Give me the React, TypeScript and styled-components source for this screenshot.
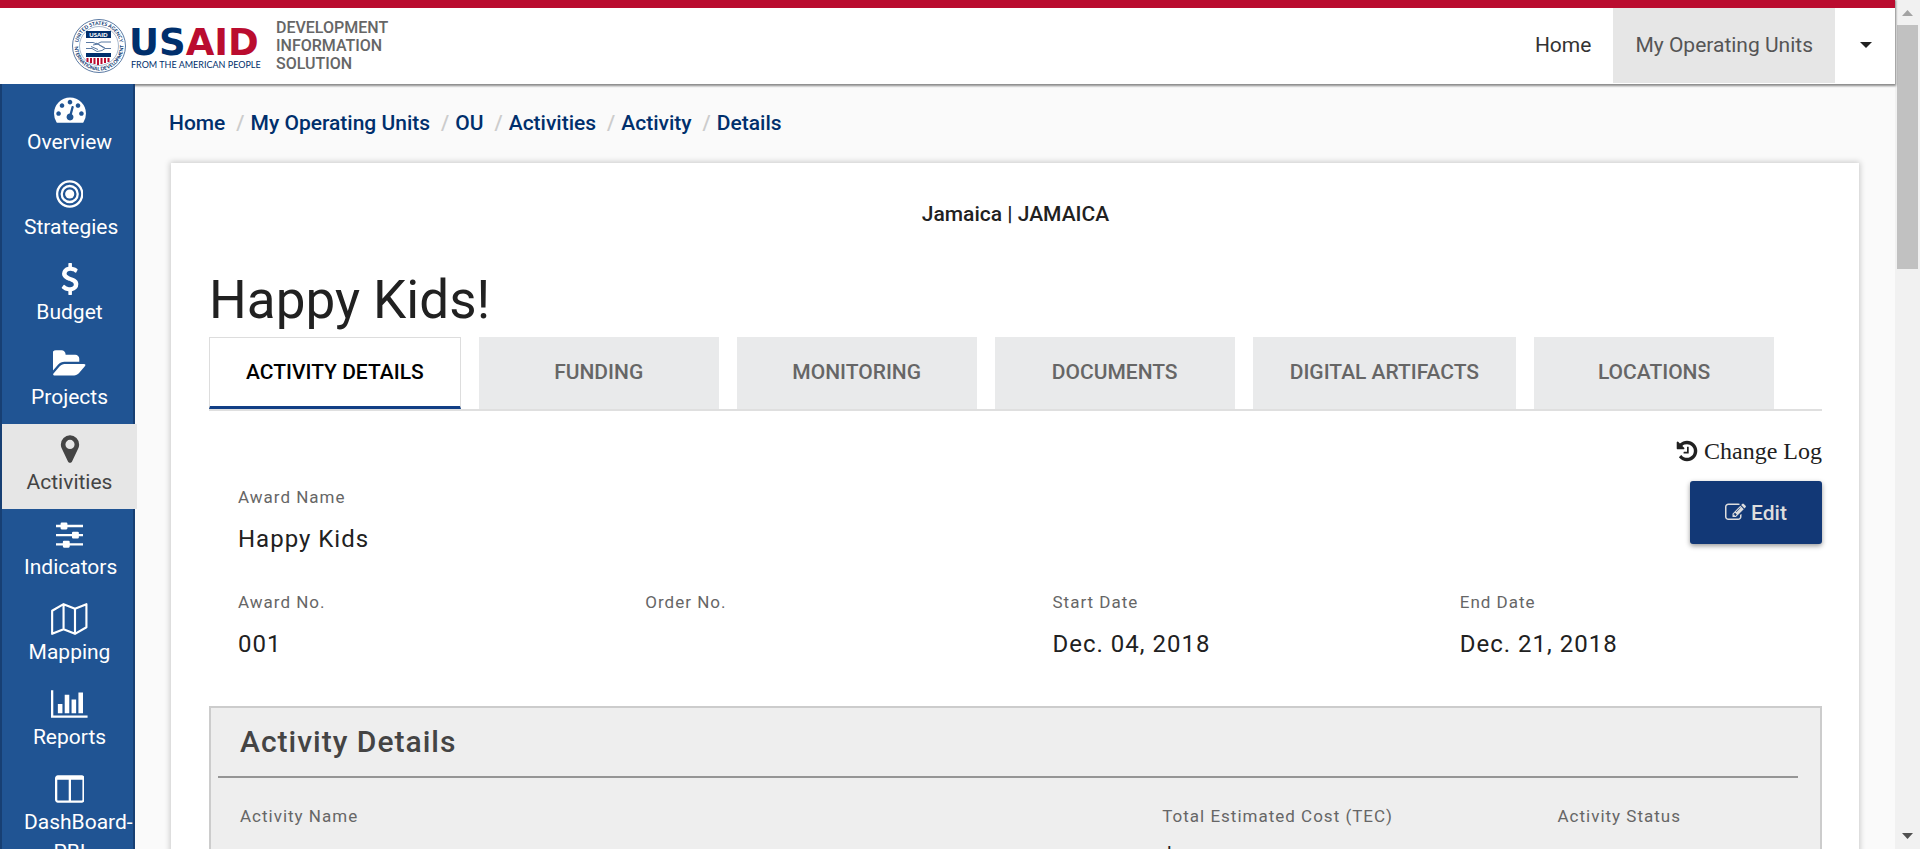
import React from "react";
import styled, { createGlobalStyle } from "styled-components";

const GlobalStyle = createGlobalStyle`
  *, *::before, *::after { box-sizing: border-box; }
  body {
    margin: 0;
    background: #fafafa;
    color: #212121;
    font-family: Roboto, "Liberation Sans", sans-serif;
  }
  h1, h2, p, ul, ol, dl, dd { margin: 0; padding: 0; }
  ul, ol { list-style: none; }
  a { color: inherit; text-decoration: none; }
  button { border: 0; padding: 0; background: none; font: inherit; color: inherit; cursor: pointer; }
`;

const Viewport = styled.div`
  display: flex;
  height: 100vh;
  overflow: hidden;
`;

const Page = styled.div`
  display: flex;
  flex-direction: column;
  flex: 1;
  min-width: 0;
`;

/* ---------- header ---------- */

const Header = styled.header`
  display: flex;
  align-items: stretch;
  justify-content: space-between;
  flex: none;
  height: 84px;
  border-top: 8px solid #ba0c2f;
  background: #fff;
  box-shadow: 0 1px 2px 1px rgba(0, 0, 0, 0.45);
  z-index: 1;
`;

const Brand = styled.a`
  display: flex;
  align-items: center;
  gap: 12px;
  padding-left: 72px;
`;

const BrandName = styled.span`
  width: 120px;
  color: #666;
  font-size: 16px;
  font-weight: 500;
  line-height: 18px;
`;

const TopNav = styled.nav`
  display: flex;
  padding-bottom: 1px;
`;

const TopLink = styled.a<{ $active?: boolean }>`
  display: flex;
  align-items: center;
  padding: 0 22px 2px;
  background: ${(p) => (p.$active ? "#e6e6e6" : "transparent")};
  color: ${(p) => (p.$active ? "#555" : "#333")};
  font-size: 21px;
`;

const MenuButton = styled.button`
  display: flex;
  align-items: center;
  justify-content: center;
  width: 60px;
  padding: 0 0 1px 2px;
`;

/* ---------- side navigation ---------- */

const Body = styled.div`
  display: flex;
  flex: 1;
  min-height: 0;
`;

const SideNav = styled.nav`
  flex: none;
  width: 135px;
  border: solid #173f73;
  border-width: 0 2px;
  background: #205493;
  z-index: 2;
`;

const SideLink = styled.a<{ $active?: boolean }>`
  display: flex;
  flex-direction: column;
  align-items: center;
  gap: 2px;
  width: 135px;
  height: 85px;
  padding: 9px 22px 0;
  background: ${(p) => (p.$active ? "#e6e6e6" : "transparent")};
  color: ${(p) => (p.$active ? "#444" : "#fff")};
  font-size: 21px;
  line-height: 30px;
  text-align: center;
`;

const SideIcon = styled.svg`
  flex: none;
  height: 32px;
  fill: currentColor;
`;

const SideLabel = styled.span`
  align-self: stretch;
`;

/* ---------- content ---------- */

const Main = styled.main`
  flex: 1;
  min-width: 0;
  padding: 24px 36px 0;
`;

const Crumbs = styled.ol`
  display: flex;
  margin-left: -2px;
  color: #002f6c;
  font-size: 21px;
  font-weight: 500;
  line-height: 30px;
`;

const Crumb = styled.li`
  & + &::before {
    content: "/";
    padding: 0 6px 0 11px;
    color: #ccc;
  }
`;

const Card = styled.section`
  margin-top: 25px;
  padding: 36px 37px 0 38px;
  background: #fff;
  box-shadow: 0 0 6px 1px rgba(0, 0, 0, 0.2);
`;

const Unit = styled.p`
  font-size: 21px;
  font-weight: 500;
  line-height: 30px;
  text-align: center;
`;

const Title = styled.h1`
  margin-top: 35px;
  padding-bottom: 1px;
  font-size: 53px;
  font-weight: 400;
  line-height: 72px;
`;

const Tabs = styled.div`
  display: flex;
  gap: 18px;
  border-bottom: 2px solid #dfdfdf;
`;

const Tab = styled.button<{ $active?: boolean }>`
  min-width: 240px;
  height: 72px;
  padding: 0 36px;
  border: solid ${(p) => (p.$active ? "#ddd" : "#e9eaeb")};
  border-width: 1px 1px 3px;
  border-bottom-color: ${(p) => (p.$active ? "#113f85" : "#e9eaeb")};
  background: ${(p) => (p.$active ? "#fff" : "#e9eaeb")};
  color: ${(p) => (p.$active ? "#000" : "#666")};
  font-size: 21px;
  font-weight: 500;
`;

const Summary = styled.div`
  position: relative;
  padding: 71px 0 14px 29px;
`;

const Actions = styled.div`
  position: absolute;
  top: 25px;
  right: 0;
  display: flex;
  flex-direction: column;
  align-items: flex-end;
  gap: 15px;
  z-index: 1;
`;

const ChangeLog = styled.button`
  display: flex;
  align-items: center;
  gap: 5px;
  font-family: "Liberation Serif", serif;
  font-size: 24px;
  line-height: 30px;
`;

const EditButton = styled.button`
  display: flex;
  align-items: center;
  justify-content: center;
  gap: 5px;
  width: 132px;
  height: 63px;
  border-radius: 3px;
  background: #123876;
  box-shadow: 0 2px 5px rgba(0, 0, 0, 0.4);
  color: #ddd;
  font-size: 21px;
  font-weight: 500;
`;

const Glyph = styled.svg`
  fill: currentColor;
`;

const FieldGrid = styled.dl<{ $columns: string }>`
  display: grid;
  grid-template-columns: ${(p) => p.$columns};
  margin-right: -45px;
`;

const FieldCell = styled.div`
  height: 105px;
`;

const FieldLabel = styled.dt`
  color: #666;
  font-size: 17px;
  letter-spacing: 1px;
  line-height: 30px;
`;

const FieldValue = styled.dd`
  margin-top: 11px;
  font-size: 24px;
  letter-spacing: 1px;
  line-height: 32px;
`;

const Panel = styled.section`
  padding: 0 22px 0 7px;
  border: 2px solid #ccc;
  background: #eee;
`;

const PanelTitle = styled.h2`
  padding: 14px 22px 14px;
  border-bottom: 2px solid #959595;
  color: #444;
  font-size: 30px;
  font-weight: 500;
  letter-spacing: 1px;
  line-height: 40px;
`;

const PanelBody = styled.div`
  padding: 23px 22px 0;
`;

/* ---------- scroll bar ---------- */

const ScrollTrack = styled.div`
  display: flex;
  flex-direction: column;
  align-items: center;
  justify-content: space-between;
  flex: none;
  width: 25px;
  background: #f1f1f1;
`;

const ScrollStart = styled.div`
  display: flex;
  flex-direction: column;
  align-items: center;
  width: 100%;
`;

const ScrollArrow = styled.svg<{ $muted?: boolean }>`
  display: block;
  width: 25px;
  height: 25px;
  fill: ${(p) => (p.$muted ? "#a3a3a3" : "#505050")};
`;

const ScrollThumb = styled.div`
  width: 21px;
  height: 244px;
  background: #c1c1c1;
`;

/* ---------- icons ---------- */

const icons = {
  tachometer: {
    width: 1792,
    body: (
      <path d="M384 1152q0-53-37.5-90.5t-90.5-37.5-90.5 37.5-37.5 90.5 37.5 90.5 90.5 37.5 90.5-37.5 37.5-90.5zm192-448q0-53-37.5-90.5t-90.5-37.5-90.5 37.5-37.5 90.5 37.5 90.5 90.5 37.5 90.5-37.5 37.5-90.5zm428 481l101-382q6-26-7.5-48.5t-38.5-29.5-48 6.5-30 39.5l-101 382q-60 5-107 43.5t-63 98.5q-20 77 20 146t117 89 146-20 89-117q16-60-6-117t-72-91zm660-33q0-53-37.5-90.5t-90.5-37.5-90.5 37.5-37.5 90.5 37.5 90.5 90.5 37.5 90.5-37.5 37.5-90.5zm-640-640q0-53-37.5-90.5t-90.5-37.5-90.5 37.5-37.5 90.5 37.5 90.5 90.5 37.5 90.5-37.5 37.5-90.5zm448 192q0-53-37.5-90.5t-90.5-37.5-90.5 37.5-37.5 90.5 37.5 90.5 90.5 37.5 90.5-37.5 37.5-90.5zm320 448q0 261-141 483-19 29-54 29h-1402q-35 0-54-29-141-221-141-483 0-182 71-348t191-286 286-191 348-71 348 71 286 191 191 286 71 348z" />
    ),
  },
  bullseye: {
    width: 1536,
    body: (
      <>
        <circle cx="768" cy="896" r="256" />
        <circle cx="768" cy="896" r="448" fill="none" stroke="currentColor" strokeWidth="128" />
        <circle cx="768" cy="896" r="704" fill="none" stroke="currentColor" strokeWidth="128" />
      </>
    ),
  },
  dollar: {
    width: 1792,
    body: (
      <path d="M1362 1185q0 153-99.5 263.5t-258.5 136.5v175q0 14-9 23t-23 9h-135q-13 0-22.5-9.5t-9.5-22.5v-175q-66-9-127.5-31t-101.5-44.5-74-48-46.5-37.5-17.5-18q-17-21-2-41l103-135q7-10 23-12 15-2 24 9l2 2q113 99 243 125 37 8 74 8 81 0 142.5-43t61.5-122q0-28-15-53t-33.5-42-58.5-37.5-66-32-80-32.5q-39-16-61.5-25t-61.5-26.5-62.5-31-56.5-35.5-53.5-42.5-43.5-49-35.5-58-21-66.5-8.5-78q0-138 98-242t255-134v-180q0-13 9.5-22.5t22.5-9.5h135q14 0 23 9t9 23v176q57 6 110.5 23t87 33.5 63.5 37.5 39 29 15 14q17 18 5 38l-81 146q-8 15-23 16-14 3-27-7-3-3-14.5-12t-39-26.5-58.5-32-74.5-26-85.5-11.5q-95 0-155 43t-60 111q0 26 8.5 48t29.5 41.5 39.5 33 56 31 60.5 27 70 27.5q53 20 81 31.5t76 35 75.5 42.5 62 50 53 63.5 31.5 76.5 13 94z" />
    ),
  },
  folder: {
    width: 1815,
    body: (
      <path d="M1815 952q0 31-31 66l-336 396q-43 51-120.5 86.5t-143.5 35.5h-1088q-34 0-60.5-13t-26.5-43q0-31 31-66l336-396q43-51 120.5-86.5t143.5-35.5h1088q34 0 60.5 13t26.5 43zm-343-344v160h-832q-94 0-197 47.5t-164 119.5l-337 396-5 6q0-4-.5-12.5t-.5-12.5v-960q0-92 66-158t158-66h320q92 0 158 66t66 158v32h544q92 0 158 66t66 158z" />
    ),
  },
  marker: {
    width: 1792,
    body: (
      <path d="M1152 640q0-106-75-181t-181-75-181 75-75 181 75 181 181 75 181-75 75-181zm256 0q0 109-33 179l-364 774q-16 33-47.5 52t-67.5 19-67.5-19-46.5-52l-365-774q-33-70-33-179 0-212 150-362t362-150 362 150 150 362z" />
    ),
  },
  sliders: {
    width: 1536,
    body: (
      <>
        <path d="M0 384h1536v128H0zM0 896h1536v128H0zM0 1408h1536v128H0z" />
        <rect x="256" y="256" width="384" height="384" rx="64" />
        <rect x="896" y="768" width="384" height="384" rx="64" />
        <rect x="384" y="1280" width="384" height="384" rx="64" />
      </>
    ),
  },
  map: {
    width: 2048,
    body: (
      <path
        d="M64 431L704 64l640 260L1984 64v1297l-640 367-640-260L64 1728zM704 64v1404M1344 324v1404"
        fill="none"
        stroke="currentColor"
        strokeWidth="120"
        strokeLinejoin="round"
      />
    ),
  },
  chart: {
    width: 2048,
    body: (
      <path d="M640 896v512h-256v-512h256zm384-512v1024h-256v-1024h256zm1024 1152v128h-2048v-1536h128v1408h1920zm-640-896v768h-256v-768h256zm384-384v1152h-256v-1152h256z" />
    ),
  },
  columns: {
    width: 1664,
    body: (
      <path d="M160 1536h608v-1152h-640v1120q0 13 9.5 22.5t22.5 9.5zm1376-32v-1120h-640v1152h608q13 0 22.5-9.5t9.5-22.5zm128-1216v1216q0 66-47 113t-113 47h-1344q-66 0-113-47t-47-113v-1216q0-66 47-113t113-47h1344q66 0 113 47t47 113z" />
    ),
  },
};

type IconName = keyof typeof icons;

const sections: { icon: IconName; label: string; active?: boolean }[] = [
  { icon: "tachometer", label: "Overview" },
  { icon: "bullseye", label: "Strategies" },
  { icon: "dollar", label: "Budget" },
  { icon: "folder", label: "Projects" },
  { icon: "marker", label: "Activities", active: true },
  { icon: "sliders", label: "Indicators" },
  { icon: "map", label: "Mapping" },
  { icon: "chart", label: "Reports" },
  { icon: "columns", label: "DashBoard-PBI" },
];

const crumbs = ["Home", "My Operating Units", "OU", "Activities", "Activity", "Details"];

const tabs = [
  "ACTIVITY DETAILS",
  "FUNDING",
  "MONITORING",
  "DOCUMENTS",
  "DIGITAL ARTIFACTS",
  "LOCATIONS",
];

function Logo() {
  return (
    <svg width="192" height="56" viewBox="0 0 192 56" role="img" aria-label="USAID">
      <defs>
        <path id="seal-top" d="M6 28a21 21 0 0 1 42 0" />
        <path id="seal-bottom" d="M2.500 28a24.500 24.500 0 0 0 49 0" />
      </defs>
      <circle cx="27" cy="28" r="26.500" fill="#fff" stroke="#5b7aa3" strokeWidth="1" />
      <circle cx="27" cy="28" r="19.500" fill="none" stroke="#a9b9ce" strokeWidth="1" />
      <g fill="#002f6c" fontFamily="Lato, sans-serif" fontWeight="700" fontSize="5">
        <text textAnchor="middle">
          <textPath href="#seal-top" startOffset="50%">UNITED STATES AGENCY</textPath>
        </text>
        <text textAnchor="middle">
          <textPath href="#seal-bottom" startOffset="50%">INTERNATIONAL DEVELOPMENT</textPath>
        </text>
      </g>
      <rect x="14" y="13" width="25" height="7" fill="#002f6c" />
      <text x="26.500" y="19" textAnchor="middle" fill="#fff" fontFamily="Lato, sans-serif" fontWeight="900" fontSize="6">
        USAID
      </text>
      <g fill="none" stroke="#5b7aa3" strokeWidth="1">
        <path d="M14 24.500h7l4 1.500 4-2h10M14 30.500h6l5 3 5-1 3-2h6M21 27l5-1 7 4M19 28.500l7 3M24 25l8 5" />
      </g>
      <path d="M14 35h25v4H14z" fill="#002f6c" />
      <path d="M15.500 40v4M19 40v5M22.500 40v6M26 40v7M29.500 40v6M33 40v5M36.500 40v4" stroke="#ba0c2f" strokeWidth="2" />
      <text x="57" y="37" fontFamily="'DejaVu Sans', sans-serif" fontWeight="700" fontSize="37" fill="#002f6c">
        US<tspan fill="#ba0c2f">AID</tspan>
      </text>
      <text x="59" y="50" fontFamily="Lato, sans-serif" fontWeight="400" fontSize="9" fill="#002f6c">
        FROM THE AMERICAN PEOPLE
      </text>
    </svg>
  );
}

function Field({ label, value }: { label: string; value?: string }) {
  return (
    <FieldCell>
      <FieldLabel>{label}</FieldLabel>
      <FieldValue>{value}</FieldValue>
    </FieldCell>
  );
}

export default function App() {
  return (
    <>
      <GlobalStyle />
      <Viewport>
        <Page>
          <Header>
            <Brand href="#home">
              <Logo />
              <BrandName>DEVELOPMENT INFORMATION SOLUTION</BrandName>
            </Brand>
            <TopNav>
              <TopLink href="#home">Home</TopLink>
              <TopLink href="#units" $active>My Operating Units</TopLink>
              <MenuButton aria-label="Account menu">
                <Glyph width="12" height="6" viewBox="0 0 12 6">
                  <path d="M0 0h12L6 6z" />
                </Glyph>
              </MenuButton>
            </TopNav>
          </Header>
          <Body>
            <SideNav>
              {sections.map(({ icon, label, active }) => (
                <SideLink key={label} href={`#${label.toLowerCase()}`} $active={active}>
                  <SideIcon viewBox={`0 0 ${icons[icon].width} 1792`} aria-hidden="true">
                    {icons[icon].body}
                  </SideIcon>
                  <SideLabel>{label}</SideLabel>
                </SideLink>
              ))}
            </SideNav>
            <Main>
              <Crumbs>
                {crumbs.map((crumb) => (
                  <Crumb key={crumb}>
                    <a href={`#${crumb.toLowerCase()}`}>{crumb}</a>
                  </Crumb>
                ))}
              </Crumbs>
              <Card>
                <Unit>Jamaica | JAMAICA</Unit>
                <Title>Happy Kids!</Title>
                <Tabs role="tablist">
                  {tabs.map((tab, i) => (
                    <Tab key={tab} role="tab" aria-selected={i === 0} $active={i === 0}>
                      {tab}
                    </Tab>
                  ))}
                </Tabs>
                <Summary>
                  <Actions>
                    <ChangeLog>
                      <Glyph width="24" height="24" viewBox="0 0 1792 1792" aria-hidden="true">
                        <path d="M1664 896q0 156-61 298t-164 245-245 164-298 61q-172 0-327-72.5t-264-204.5q-7-10-6.5-22.5t8.500-20.500l137-138q10-9 25-9 16 2 23 12 73 95 179 147t225 52q104 0 198.500-40.500t163.500-109.500 109.500-163.500 40.500-198.500-40.500-198.500-109.500-163.500-163.500-109.500-198.500-40.500q-98 0-188 35.500t-160 101.500l137 138q31 30 14 69-17 40-59 40h-448q-26 0-45-19t-19-45v-448q0-42 40-59 39-17 69 14l130 129q107-101 244.500-156.500t284.500-55.500q156 0 298 61t245 164 164 245 61 298zm-640-288v448q0 14-9 23t-23 9h-320q-14 0-23-9t-9-23v-64q0-14 9-23t23-9h224v-352q0-14 9-23t23-9h64q14 0 23 9t9 23z" />
                      </Glyph>
                      Change Log
                    </ChangeLog>
                    <EditButton>
                      <Glyph width="21" height="21" viewBox="0 0 1792 1792" aria-hidden="true">
                        <path d="M888 1184l116-116-152-152-116 116v56h96v96h56zm440-720q-16-16-33 1l-350 350q-17 17-1 33t33-1l350-350q17-17 1-33zm80 594v190q0 119-84.500 203.500t-203.500 84.500h-832q-119 0-203.500-84.500t-84.500-203.500v-832q0-119 84.500-203.500t203.500-84.500h832q63 0 117 25 15 7 18 23 3 17-9 29l-49 49q-14 14-32 8-23-6-45-6h-832q-66 0-113 47t-47 113v832q0 66 47 113t113 47h832q66 0 113-47t47-113v-126q0-13 9-22l64-64q15-15 35-7t20 29zm-96-738l288 288-672 672h-288v-288zm444 132l-92 92-288-288 92-92q28-28 68-28t68 28l152 152q28 28 28 68t-28 68z" />
                      </Glyph>
                      Edit
                    </EditButton>
                  </Actions>
                  <FieldGrid $columns="1fr">
                    <Field label="Award Name" value="Happy Kids" />
                  </FieldGrid>
                  <FieldGrid $columns="repeat(4, 1fr)">
                    <Field label="Award No." value="001" />
                    <Field label="Order No." />
                    <Field label="Start Date" value="Dec. 04, 2018" />
                    <Field label="End Date" value="Dec. 21, 2018" />
                  </FieldGrid>
                </Summary>
                <Panel>
                  <PanelTitle>Activity Details</PanelTitle>
                  <PanelBody>
                    <FieldGrid $columns="7fr 3fr 2fr">
                      <Field label="Activity Name" />
                      <Field label="Total Estimated Cost (TEC)" value="$" />
                      <Field label="Activity Status" />
                    </FieldGrid>
                  </PanelBody>
                </Panel>
              </Card>
            </Main>
          </Body>
        </Page>
        <ScrollTrack aria-hidden="true">
          <ScrollStart>
            <ScrollArrow $muted viewBox="0 0 25 25">
              <path d="M7 16h11l-5.500-6z" />
            </ScrollArrow>
            <ScrollThumb />
          </ScrollStart>
          <ScrollArrow viewBox="0 0 25 25">
            <path d="M7 9h11l-5.500 6z" />
          </ScrollArrow>
        </ScrollTrack>
      </Viewport>
    </>
  );
}
